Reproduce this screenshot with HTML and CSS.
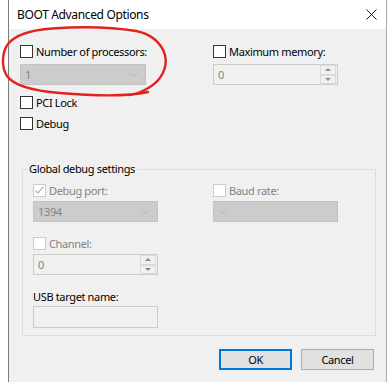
FILE: index.html
```html
<!doctype html>
<html lang="en">
<head>
    <meta charset="UTF-8">
    <title>BOOT Advanced Options</title>
    <link rel="stylesheet" href="styles.css">
</head>
<body>
    <div class="window">
        <div class="titlebar">
            <span class="title">BOOT Advanced Options</span>
            <svg class="close" width="11" height="11" viewBox="0 0 11 11"><path d="M0.5 0.5L10.5 10.5M10.5 0.5L0.5 10.5" stroke="#1a1a1a" stroke-width="1" fill="none"/></svg>
        </div>
        <div class="client">
            <div class="cols">
                <div class="col">
                    <label class="check"><span class="box"></span>Number of processors:</label>
                    <div class="combo off">1<svg class="chev" width="9" height="5" viewBox="0 0 9 5"><path d="M0.5 0.5L4.5 4.5L8.5 0.5" stroke="#b4b4b4" fill="none"/></svg></div>
                </div>
                <div class="col">
                    <label class="check"><span class="box"></span>Maximum memory:</label>
                    <div class="spin">0<span class="spin-btns"><span class="arr up"></span><span class="arr down"></span></span></div>
                </div>
            </div>
            <label class="check pci"><span class="box"></span>PCI Lock</label>
            <label class="check dbg"><span class="box"></span>Debug</label>

            <fieldset class="group">
                <legend>Global debug settings</legend>
                <div class="cols inner">
                    <div class="col">
                        <label class="check dis"><span class="box"><svg width="11" height="11" viewBox="0 0 11 11"><path d="M1.5 5.5L4 8L9.5 1.5" stroke="#b8b8b8" stroke-width="1.2" fill="none"/></svg></span>Debug port:</label>
                        <div class="combo off">1394<svg class="chev" width="9" height="5" viewBox="0 0 9 5"><path d="M0.5 0.5L4.5 4.5L8.5 0.5" stroke="#b4b4b4" fill="none"/></svg></div>
                    </div>
                    <div class="col">
                        <label class="check dis"><span class="box"></span>Baud rate:</label>
                        <div class="combo off"><svg class="chev" width="9" height="5" viewBox="0 0 9 5"><path d="M0.5 0.5L4.5 4.5L8.5 0.5" stroke="#b4b4b4" fill="none"/></svg></div>
                    </div>
                </div>
                <label class="check dis chan"><span class="box"></span>Channel:</label>
                <div class="spin">0<span class="spin-btns"><span class="arr up"></span><span class="arr down"></span></span></div>
                <div class="usb-label">USB target name:</div>
                <div class="textbox"></div>
            </fieldset>

            <div class="buttons">
                <button class="btn default">OK</button>
                <button class="btn">Cancel</button>
            </div>
        </div>
    </div>
    <!-- red hand-drawn circle over the processors option -->
    <svg class="scribble" width="388" height="382" viewBox="0 0 388 382">
        <path d="M148 92 C130 96 95 96 60 93 C35 91 14 86 7 76 C1 67 2 52 8 44 C16 34 32 30 52 28.5 C80 26.5 112 27 136 31 C152 34 162 44 165 55 C168 68 161 80 150 87 C142 92 135 95 128 95" stroke="#e0231f" stroke-width="2.4" fill="none" stroke-linecap="round"/>
    </svg>
</body>
</html>
```

FILE: styles.css
```css
*{
    margin:0;
    padding:0;
    box-sizing:border-box;
}
body{
    background:#fff;
    font-family:"Noto Sans","Open Sans",sans-serif;
    font-size:11px;
    letter-spacing:-0.35px;
    color:#000;
    position:relative;
    width:388px;
    height:382px;
    overflow:hidden;
}
.window{
    margin-left:8px;
    width:379px;
    height:382px;
    border-left:1px solid #7d7d7d;
    border-right:1px solid #a8a8a8;
    display:flex;
    flex-direction:column;
}
.titlebar{
    height:29px;
    background:#fff;
    display:flex;
    align-items:center;
    justify-content:space-between;
    padding:0 9px 0 8px;
}
.title{
    font-size:12px;
}
.client{
    flex:1;
    background:#f0f0f0;
    padding:16px 0 0 11px;
}
.cols{
    display:grid;
    grid-template-columns:193px 125px;
}
.check{
    display:flex;
    align-items:center;
    gap:3px;
    height:13px;
    line-height:13px;
    white-space:nowrap;
}
.box{
    flex:none;
    width:13px;
    height:13px;
    border:1px solid #333;
    background:#fff;
    display:flex;
    align-items:center;
    justify-content:center;
}
.check.dis{
    color:#838383;
}
.check.dis .box{
    border-color:#cccccc;
}
.combo{
    margin-top:6px;
    width:126px;
    height:21px;
    border:1px solid #c3c3c3;
    background:#cccccc;
    color:#838383;
    display:flex;
    align-items:center;
    justify-content:space-between;
    padding:0 7px 0 4px;
}
.spin{
    margin-top:6px;
    width:125px;
    height:21px;
    border:1px solid #cccccc;
    background:#f0f0f0;
    color:#838383;
    display:flex;
    align-items:center;
    justify-content:space-between;
    padding:0 1px 0 4px;
}
.spin-btns{
    display:flex;
    flex-direction:column;
    width:16px;
    height:19px;
}
.arr{
    flex:1;
    border:1px solid #dadada;
    background:#f0f0f0;
    display:flex;
    align-items:center;
    justify-content:center;
}
.arr::after{
    content:"";
    border-left:3px solid transparent;
    border-right:3px solid transparent;
}
.arr.up::after{
    border-bottom:3px solid #8a8a8a;
}
.arr.down::after{
    border-top:3px solid #8a8a8a;
}
.pci{
    margin-top:11px;
}
.dbg{
    margin-top:8px;
}
.group{
    margin:31px 0 0 2px;
    width:354px;
    border:1px solid #dcdcdc;
    padding:7px 0 7px 10px;
}
.group legend{
    margin-left:-6px;
    padding:0 2px;
    line-height:16px;
}
.inner{
    grid-template-columns:180px 125px;
}
.inner .combo{
    margin-top:4px;
    width:125px;
}
.chan{
    margin-top:15px;
}
.group .spin{
    margin-top:4px;
}
.usb-label{
    margin-top:14px;
    line-height:15px;
}
.textbox{
    margin-top:2px;
    width:125px;
    height:22px;
    border:1px solid #cccccc;
    background:#f0f0f0;
}
.buttons{
    display:flex;
    justify-content:flex-end;
    gap:9px;
    margin-top:13px;
    padding-right:12px;
}
.btn{
    width:73px;
    height:21px;
    font:inherit;
    letter-spacing:inherit;
    background:#e1e1e1;
    border:1px solid #adadad;
}
.btn.default{
    border:2px solid #0078d7;
}
.scribble{
    position:absolute;
    left:0;
    top:0;
    pointer-events:none;
}
```
